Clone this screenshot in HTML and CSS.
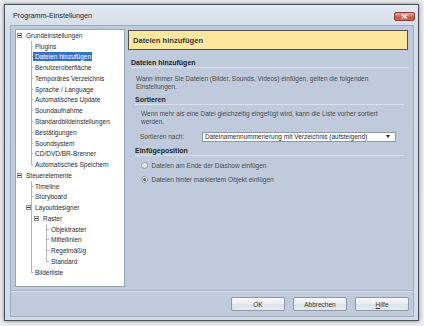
FILE: index.html
```html
<!DOCTYPE html>
<html lang="de">
<head>
<meta charset="utf-8">
<title>Programm-Einstellungen</title>
<link rel="stylesheet" href="styles.css">
</head>
<body>
<div class="win">
  <div class="titlebar">
    <span class="title">Programm-Einstellungen</span>
    <span class="close"><svg width="7" height="5" viewBox="0 0 7 5"><path d="M1 0.5 L6 4.5 M6 0.5 L1 4.5" stroke="#fff" stroke-width="1.3"/></svg></span>
  </div>
  <div class="client">
    <div class="main">
      <div class="tree">
        <div class="row"><span class="s1"></span><span class="box"></span><span class="g2"></span><span class="lbl">Grundeinstellungen</span></div>
        <div class="row"><span class="s15"></span><span class="el"></span><span class="lbl">Plugins</span></div>
        <div class="row"><span class="s15"></span><span class="el"></span><span class="lbl sel">Dateien hinzufügen</span></div>
        <div class="row"><span class="s15"></span><span class="el"></span><span class="lbl">Benutzeroberfläche</span></div>
        <div class="row"><span class="s15"></span><span class="el"></span><span class="lbl">Temporäres Verzeichnis</span></div>
        <div class="row"><span class="s15"></span><span class="el"></span><span class="lbl">Sprache / Language</span></div>
        <div class="row"><span class="s15"></span><span class="el"></span><span class="lbl">Automatisches Update</span></div>
        <div class="row"><span class="s15"></span><span class="el"></span><span class="lbl">Soundaufnahme</span></div>
        <div class="row"><span class="s15"></span><span class="el"></span><span class="lbl">Standardbildeinstellungen</span></div>
        <div class="row"><span class="s15"></span><span class="el"></span><span class="lbl">Bestätigungen</span></div>
        <div class="row"><span class="s15"></span><span class="el"></span><span class="lbl">Soundsystem</span></div>
        <div class="row"><span class="s15"></span><span class="el"></span><span class="lbl">CD/DVD/BR-Brenner</span></div>
        <div class="row"><span class="s15"></span><span class="el end"></span><span class="lbl">Automatisches Speichern</span></div>
        <div class="row"><span class="s1"></span><span class="box"></span><span class="g2"></span><span class="lbl">Steuerelemente</span></div>
        <div class="row"><span class="s15"></span><span class="el"></span><span class="lbl">Timeline</span></div>
        <div class="row"><span class="s15"></span><span class="el"></span><span class="lbl">Storyboard</span></div>
        <div class="row"><span class="s10"></span><span class="box"></span><span class="vl w2"></span><span class="lbl">Layoutdesigner</span></div>
        <div class="row"><span class="s15"></span><span class="vl w3"></span><span class="box"></span><span class="g2"></span><span class="lbl">Raster</span></div>
        <div class="row"><span class="s15"></span><span class="vl w15"></span><span class="el w3"></span><span class="lbl">Objektraster</span></div>
        <div class="row"><span class="s15"></span><span class="vl w15"></span><span class="el w3"></span><span class="lbl">Mittellinien</span></div>
        <div class="row"><span class="s15"></span><span class="vl w15"></span><span class="el w3"></span><span class="lbl">Regelmäßig</span></div>
        <div class="row"><span class="s15"></span><span class="vl w15"></span><span class="el w3 end"></span><span class="lbl">Standard</span></div>
        <div class="row"><span class="s15"></span><span class="el end"></span><span class="lbl">Bilderliste</span></div>
      </div>
      <div class="panel">
        <div class="hdr">Dateien hinzufügen</div>
        <div class="h1">Dateien hinzufügen</div>
        <div class="desc">Wann immer Sie Dateien (Bilder, Sounds, Videos) einfügen, gelten die folgenden<br>Einstellungen.</div>
        <div class="h2">Sortieren</div>
        <div class="desc2">Wenn mehr als eine Datei gleichzeitig eingefügt wird, kann die Liste vorher sortiert<br>werden.</div>
        <div class="sortrow">
          <span class="sortlbl">Sortieren nach:</span>
          <span class="select"><span>Dateinamennummerierung mit Verzeichnis (aufsteigend)</span><span class="arrow"></span></span>
        </div>
        <div class="h2 h2b">Einfügeposition</div>
        <div class="opt o1"><span class="radio"></span><span>Dateien am Ende der Diashow einfügen</span></div>
        <div class="opt o2"><span class="radio on"></span><span>Dateien hinter markiertem Objekt einfügen</span></div>
      </div>
    </div>
    <div class="sep"></div>
    <div class="buttons">
      <span class="btn">OK</span>
      <span class="btn">Abbrechen</span>
      <span class="btn"><u>H</u>ilfe</span>
    </div>
  </div>
</div>
</body>
</html>
```
FILE: styles.css
```css
* { box-sizing: border-box; }
html, body { margin: 0; }
body {
  width: 424px;
  height: 326px;
  overflow: hidden;
  background: #eceef1;
  font-family: "Liberation Sans", Arial, sans-serif;
  font-size: 6.5px;
  color: #333;
}
.win {
  margin: 4px 0 0 4px;
  width: 415px;
  height: 317px;
  border: 1px solid #4a5260;
  background: linear-gradient(#e4eaf2, #d4dde9 22px, #d2dbe7);
  display: flex;
  flex-direction: column;
  box-shadow: 0 0 4px rgba(0, 0, 0, .5);
}
.titlebar {
  height: 20px;
  flex: none;
  display: flex;
  align-items: center;
  padding-left: 8px;
}
.title { font-size: 7.2px; color: #1b2533; }
.close {
  margin-left: auto;
  margin-right: 3px;
  margin-top: 3px;
  width: 21px;
  height: 9px;
  border: 1px solid #8b3b33;
  border-radius: 2px;
  background: linear-gradient(#eba69d, #d66f62 50%, #c4493c 51%, #d26a5c);
  display: flex;
  align-items: center;
  justify-content: center;
}
.close svg { display: block; }
.client {
  flex: 1;
  margin: 0 4px 3px 5px;
  border: 1px solid #9dabbd;
  background: #bfcbdc;
  display: flex;
  flex-direction: column;
}
.main {
  margin: 3px 4px 0 4px;
  height: 258px;
  display: flex;
  gap: 2px;
}
.tree {
  width: 110px;
  border: 1px solid #95a3b7;
  background: #fff;
  color: #2a2a2a;
}
.row {
  height: 10.77px;
  display: flex;
  align-items: center;
}
.s1 { width: 1px; flex: none; }
.s10 { width: 10px; flex: none; }
.s15 { width: 15px; flex: none; }
.g2 { width: 2px; flex: none; }
.box {
  width: 5px;
  height: 5px;
  flex: none;
  border: 1px solid #8e8e8e;
  background: linear-gradient(#333, #333) center / 3px 1px no-repeat, #fff;
}
.vl, .el { align-self: stretch; flex: none; }
.vl { background: linear-gradient(#b3b3b3, #b3b3b3) left top / 1px 100% no-repeat; }
.el {
  width: 2px;
  background:
    linear-gradient(#b3b3b3, #b3b3b3) left top / 1px 100% no-repeat,
    linear-gradient(#b3b3b3, #b3b3b3) left center / 100% 1px no-repeat;
}
.el.end {
  background:
    linear-gradient(#b3b3b3, #b3b3b3) left top / 1px 50% no-repeat,
    linear-gradient(#b3b3b3, #b3b3b3) left center / 100% 1px no-repeat;
}
.w2 { width: 2px; }
.w3 { width: 3px; }
.w15 { width: 15px; }
.lbl {
  padding: 0 1px 0 2px;
  line-height: 9px;
  white-space: nowrap;
}
.lbl.sel { background: #3671c7; color: #fff; }
.panel {
  flex: 1;
  display: flex;
  flex-direction: column;
}
.hdr {
  margin: 1px 1px 0;
  height: 20px;
  border: 1px solid #505050;
  background: #fde69e;
  display: flex;
  align-items: center;
  padding-left: 4px;
  font-weight: bold;
  font-size: 7.6px;
  color: #3a3a3a;
}
.h1, .h2 {
  line-height: 9px;
  font-weight: bold;
  font-size: 7px;
  color: #1f1f1f;
  border-bottom: 1px solid #d9e1eb;
}
.h1 { margin: 8px 0 0 4px; }
.h2 { margin: 3px 5px 0 8px; }
.h2b { margin-top: 4.5px; }
.desc {
  margin: 7px 0 0 9px;
  line-height: 8.4px;
  color: #4a4a4a;
}
.desc2 {
  margin: 5px 0 0 14px;
  line-height: 8px;
  color: #4a4a4a;
}
.sortrow {
  margin: 6px 0 0 13px;
  height: 10px;
  display: flex;
  align-items: center;
  color: #4a4a4a;
}
.sortlbl { width: 62px; }
.select {
  width: 194px;
  height: 10px;
  border: 1px solid #8d99aa;
  background: #fff;
  display: flex;
  align-items: center;
  padding-left: 2px;
  color: #2a2a2a;
}
.arrow {
  margin-left: auto;
  margin-right: 5px;
  width: 0;
  height: 0;
  border-left: 2.5px solid transparent;
  border-right: 2.5px solid transparent;
  border-top: 3px solid #222;
}
.opt {
  margin-left: 14px;
  height: 10px;
  display: flex;
  align-items: center;
  gap: 3.5px;
  color: #4a4a4a;
}
.o1 { margin-top: 3.7px; }
.o2 { margin-top: 4px; }
.radio {
  width: 7px;
  height: 7px;
  border-radius: 50%;
  border: 1px solid #949eac;
  background: linear-gradient(#f7f8fa, #d6dbe2);
  flex: none;
  display: flex;
  align-items: center;
  justify-content: center;
}
.radio.on::after {
  content: "";
  width: 3px;
  height: 3px;
  border-radius: 50%;
  background: #5a6270;
}
.sep {
  margin-top: 3px;
  height: 2px;
  border-top: 1px solid #a3b0c2;
  border-bottom: 1px solid #d9e1ea;
}
.buttons {
  padding: 5px 4px 0;
  display: flex;
  justify-content: flex-end;
  gap: 8px;
}
.btn {
  width: 54px;
  height: 14px;
  border: 1px solid #8f9aa9;
  border-radius: 2px;
  background: linear-gradient(#f7f8fa, #e9edf2 50%, #dde3ea 51%, #e6eaef);
  display: flex;
  align-items: center;
  justify-content: center;
  color: #333;
}
```
